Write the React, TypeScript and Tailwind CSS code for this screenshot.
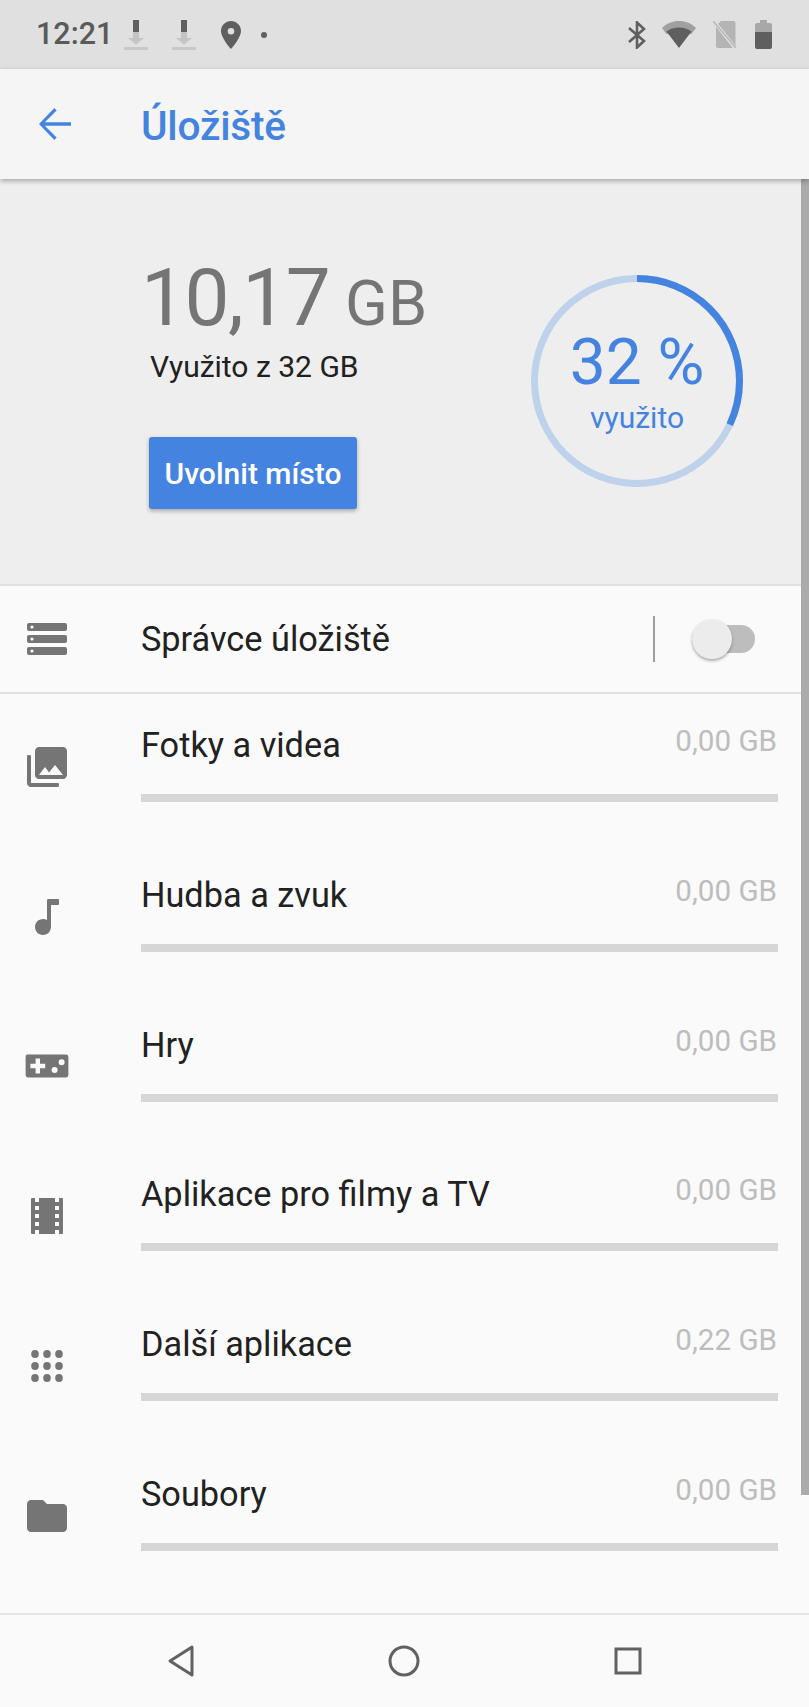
const storageItems = [
  { label: 'Fotky a videa', size: '0,00 GB', icon: 'photos' },
  { label: 'Hudba a zvuk', size: '0,00 GB', icon: 'music' },
  { label: 'Hry', size: '0,00 GB', icon: 'games' },
  { label: 'Aplikace pro filmy a TV', size: '0,00 GB', icon: 'movies' },
  { label: 'Další aplikace', size: '0,22 GB', icon: 'apps' },
  { label: 'Soubory', size: '0,00 GB', icon: 'folder' },
];

const RowIcon = ({ name }: { name: string }) => (
  <svg viewBox="0 0 24 24" className="h-12 w-12 fill-[#757575]">
    {name === 'storage' && (
      <path
        fillRule="evenodd"
        d="M3 4h18a1 1 0 0 1 1 1v2a1 1 0 0 1-1 1H3a1 1 0 0 1-1-1V5a1 1 0 0 1 1-1zm1.500 1.200a.8.8 0 1 0 0 1.600.8.8 0 0 0 0-1.600zM3 10h18a1 1 0 0 1 1 1v2a1 1 0 0 1-1 1H3a1 1 0 0 1-1-1v-2a1 1 0 0 1 1-1zm1.500 1.200a.8.8 0 1 0 0 1.600.8.8 0 0 0 0-1.600zM3 16h18a1 1 0 0 1 1 1v2a1 1 0 0 1-1 1H3a1 1 0 0 1-1-1v-2a1 1 0 0 1 1-1zm1.500 1.200a.8.8 0 1 0 0 1.600.8.8 0 0 0 0-1.600z"
      />
    )}
    {name === 'photos' && (
      <path d="M22 16V4c0-1.100-.9-2-2-2H8c-1.100 0-2 .9-2 2v12c0 1.100.9 2 2 2h12c1.100 0 2-.9 2-2zm-11-4l2.030 2.710L16 11l4 5H8l3-4zM2.700 6h.6a.7.7 0 0 1 .7.7V20h13.300a.7.7 0 0 1 .7.7v.6a.7.7 0 0 1-.7.7H4c-1.100 0-2-.9-2-2V6.700a.7.7 0 0 1 .7-.7z" />
    )}
    {name === 'music' && (
      <path d="M12 3.600v9.950c-.59-.34-1.270-.55-2-.55-2.210 0-4 1.790-4 4s1.790 4 4 4 4-1.790 4-4V6h3.400a.6.6 0 0 0 .6-.6V3.600a.6.6 0 0 0-.6-.6h-4.800a.6.6 0 0 0-.6.600z" />
    )}
    {name === 'games' && (
      <path
        fillRule="evenodd"
        d="M2 6.300h19.500a1.200 1.200 0 0 1 1.200 1.200v9a1.200 1.200 0 0 1-1.200 1.200H2.500a1.200 1.200 0 0 1-1.200-1.200v-9A1.200 1.200 0 0 1 2 6.300zM6.300 8.300v2.600H3.700v2.200h2.600v2.600h2.200v-2.600h2.600v-2.200H8.500V8.300H6.300zm9.500 4.200a1.500 1.500 0 1 0 0 3 1.500 1.500 0 0 0 0-3zm3.500-3.900a1.500 1.500 0 1 0 0 3 1.500 1.500 0 0 0 0-3z"
      />
    )}
    {name === 'movies' && (
      <path d="M18 3v2h-2V3H8v2H6V3H4.500a.5.5 0 0 0-.5.500v17a.5.5 0 0 0 .5.5H6v-2h2v2h8v-2h2v2h1.500a.5.5 0 0 0 .5-.5v-17a.5.5 0 0 0-.5-.5H18zM8 17H6v-2h2v2zm0-4H6v-2h2v2zm0-4H6V7h2v2zm10 8h-2v-2h2v2zm0-4h-2v-2h2v2zm0-4h-2V7h2v2z" />
    )}
    {name === 'apps' && (
      <g>
        <ellipse cx="6" cy="6" rx="1.900" ry="2" />
        <ellipse cx="12" cy="6" rx="1.900" ry="2" />
        <ellipse cx="18" cy="6" rx="1.900" ry="2" />
        <ellipse cx="6" cy="12" rx="1.900" ry="2" />
        <ellipse cx="12" cy="12" rx="1.900" ry="2" />
        <ellipse cx="18" cy="12" rx="1.900" ry="2" />
        <ellipse cx="6" cy="18" rx="1.900" ry="2" />
        <ellipse cx="12" cy="18" rx="1.900" ry="2" />
        <ellipse cx="18" cy="18" rx="1.900" ry="2" />
      </g>
    )}
    {name === 'folder' && (
      <path d="M10 4H4c-1.100 0-2 .9-2 2v12c0 1.100.9 2 2 2h16c1.100 0 2-.9 2-2V8c0-1.100-.9-2-2-2h-8l-2-2z" />
    )}
  </svg>
);

const DownloadIcon = () => (
  <svg viewBox="0 0 24 30" className="h-[30px] w-6">
    <rect x="9" y="0" width="6" height="12" fill="#5f5f5f" />
    <path d="M9 12h6v6h5l-8 6.500L4 18h5z" fill="#c4c4c4" />
    <rect x="0" y="27" width="24" height="3" fill="#c8c8c8" />
  </svg>
);

const StatusBar = () => (
  <div className="flex h-[69px] items-center justify-between bg-[#e0e0e0] pr-[37px] pl-[36px]">
    <div className="flex items-center">
      <span className="text-[30.5px] leading-none font-medium text-[#5a5a5a]">12:21</span>
      <div className="ml-[11px]">
        <DownloadIcon />
      </div>
      <div className="ml-6">
        <DownloadIcon />
      </div>
      <svg viewBox="0 0 20 28" className="ml-[25px] h-7 w-5">
        <path
          fillRule="evenodd"
          d="M10 0C4.500 0 0 4.400 0 10c0 7 10 18 10 18s10-11 10-18c0-5.600-4.500-10-10-10zm0 7a3.300 3.300 0 1 1 0 6.600A3.300 3.300 0 0 1 10 7z"
          fill="#5f5f5f"
        />
      </svg>
      <div className="ml-[20px] h-[6px] w-[6px] rounded-full bg-[#5f5f5f]" />
    </div>
    <div className="flex items-center">
      <svg viewBox="0 0 18 28" fill="none" className="h-7 w-[18px]">
        <path d="M1 7 16 20 9 26.500V1.500L16 8 1 21" stroke="#5f5f5f" strokeWidth="2.600" />
      </svg>
      <svg viewBox="0 0 34 27" className="ml-4 h-[27px] w-[34px]">
        <path d="M0 7C4.500 2.500 10.500 0 17 0s12.500 2.500 17 7l-4.500 6H4.500z" fill="#a0a0a0" />
        <path d="M4.500 10.500C8 7.800 12.300 6.500 17 6.500s9 1.300 12.500 4L17 27z" fill="#5f5f5f" />
      </svg>
      <svg viewBox="0 0 24 27" className="ml-[17px] h-[27px] w-6">
        <path d="M8 0h12a2.500 2.500 0 0 1 2.500 2.500V25a2 2 0 0 1-2 2H5a2 2 0 0 1-2-2V5z" fill="#b4b4b4" />
        <path d="M-1 -2 23 28" stroke="#e0e0e0" strokeWidth="3.500" />
        <path d="M0 0 23 27" stroke="#b4b4b4" strokeWidth="1.400" />
      </svg>
      <svg viewBox="0 0 17 29" className="ml-[18px] h-[29px] w-[17px]">
        <path d="M5 0h7v3h3a2 2 0 0 1 2 2v8H0V5a2 2 0 0 1 2-2h3z" fill="#a8a8a8" />
        <path d="M0 12h17v15a2 2 0 0 1-2 2H2a2 2 0 0 1-2-2z" fill="#5f5f5f" />
      </svg>
    </div>
  </div>
);

const AppBar = () => (
  <div className="relative z-10 flex h-[110px] items-center bg-[#f5f5f5] shadow-[0_2px_5px_rgba(0,0,0,0.3)]">
    <svg viewBox="0 0 24 24" className="ml-[31px] h-12 w-12 fill-[#4484e0]">
      <path d="M20 11.100H6.900l5.900-5.900-1.100-1.200L4 12l7.700 8 1.100-1.200-5.900-5.900H20z" />
    </svg>
    <h1 className="mt-[4px] ml-[62px] text-[40.6px] leading-none font-medium tracking-[-0.2px] text-[#4484e0]">Úložiště</h1>
  </div>
);

const UsageRing = () => (
  <div className="relative h-[212px] w-[212px]">
    <svg viewBox="0 0 212 212" fill="none" className="h-full w-full">
      <circle cx="106" cy="106" r="102.500" stroke="#bed2ec" strokeWidth="7" />
      <circle
        cx="106"
        cy="106"
        r="102.500"
        stroke="#4484e0"
        strokeWidth="7"
        pathLength="100"
        strokeDasharray="32 68"
        transform="rotate(-90 106 106)"
      />
    </svg>
    <div className="absolute inset-0 flex flex-col items-center justify-center text-[#4484e0]">
      <span className="mt-[2px] text-[64px] leading-[70px]">32 %</span>
      <span className="mt-[2px] text-[30px] leading-[36px]">využito</span>
    </div>
  </div>
);

const Hero = () => (
  <div className="flex h-[405px] items-start justify-between bg-[#eeeeee] pr-[66px] pl-[141px]">
    <div className="pt-[79px]">
      <div className="flex items-baseline text-[#757575]">
        <span className="text-[80px] leading-[80px] tracking-[-1.5px]">10,17</span>
        <span className="ml-[16px] text-[63px] leading-[80px]">GB</span>
      </div>
      <p className="mt-[5px] ml-[9px] text-[30px] leading-[36px] text-[#212121]">Využito z 32 GB</p>
      <button
        type="button"
        className="mt-[52px] ml-[8px] flex h-[72px] w-[208px] items-center justify-center rounded-[3px] bg-[#4484e0] text-[30px] font-medium text-white shadow-[0_2px_4px_rgba(0,0,0,0.3)]"
      >
        Uvolnit místo
      </button>
    </div>
    <div className="pt-[96px]">
      <UsageRing />
    </div>
  </div>
);

const ManagerRow = () => (
  <div className="flex h-[110px] items-center border-y-2 border-[#e0e0e0]">
    <div className="flex w-[141px] items-center">
      <div className="ml-[23px]">
        <RowIcon name="storage" />
      </div>
    </div>
    <span className="text-[34.3px] leading-10 text-[#212121]">Správce úložiště</span>
    <div className="ml-auto h-[46px] w-[2px] bg-[#9e9e9e]" />
    <div className="relative mr-[54px] ml-[37px] h-7 w-[63px] rounded-full bg-[#bdbdbd]">
      <div className="absolute top-[-6px] left-0 h-10 w-10 rounded-full bg-[#ececec] shadow-[0_2px_3px_rgba(0,0,0,0.3)]" />
    </div>
  </div>
);

const NavBar = () => (
  <div className="flex h-[94px] items-center border-t-2 border-[#e4e4e4] bg-[#fafafa]">
    <div className="flex w-full items-center justify-between pr-[167px] pl-[168px]">
      <svg viewBox="0 0 26 32" fill="none" className="h-8 w-[26px]">
        <path d="M24 2v28L2 16z" stroke="#616161" strokeWidth="3" strokeLinejoin="round" />
      </svg>
      <svg viewBox="0 0 32 32" fill="none" className="h-8 w-8">
        <circle cx="16" cy="16" r="14" stroke="#616161" strokeWidth="3" />
      </svg>
      <svg viewBox="0 0 28 28" fill="none" className="h-7 w-7">
        <rect x="2" y="2" width="24" height="24" stroke="#616161" strokeWidth="3" />
      </svg>
    </div>
  </div>
);

export default function App() {
  return (
    <div className="relative flex h-[1707px] w-[809px] flex-col overflow-hidden bg-[#fafafa] font-['Roboto',sans-serif]">
      <StatusBar />
      <AppBar />
      <Hero />
      <ManagerRow />
      <div className="flex-1">
        {storageItems.map((item) => (
          <div key={item.label} className="flex h-[149.8px]">
            <div className="flex w-[141px] items-center pb-[4px]">
              <div className="ml-[23px]">
                <RowIcon name={item.icon} />
              </div>
            </div>
            <div className="mr-[31px] flex flex-1 flex-col pt-[31px]">
              <div className="flex items-start justify-between">
                <span className="text-[34.3px] leading-10 text-[#212121]">{item.label}</span>
                <span className="mt-[-4px] mr-px text-[29.6px] leading-10 text-[#bdbdbd]">{item.size}</span>
              </div>
              <div className="mt-[29px] h-2 bg-[#d6d6d6]" />
            </div>
          </div>
        ))}
      </div>
      <NavBar />
      <div className="absolute top-[179px] right-0 h-[1316px] w-2 bg-[#ababab]" />
    </div>
  );
}
